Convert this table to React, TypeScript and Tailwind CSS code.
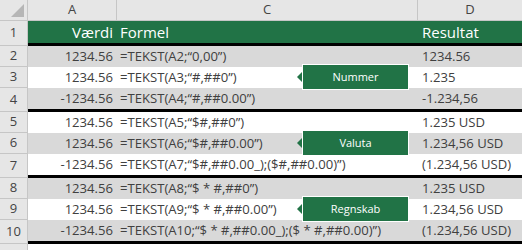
import React from "react";

type Row = {
  n: number;
  a: string;
  c: string;
  d: string;
  gray: boolean;
  thick?: boolean;
  tag?: string;
};

const rows: Row[] = [
  { n: 2, a: "1234.56", c: "=TEKST(A2;“0,00”)", d: "1234.56", gray: true },
  { n: 3, a: "1234.56", c: "=TEKST(A3;“#,##0”)", d: "1.235", gray: false, tag: "Nummer" },
  { n: 4, a: "-1234.56", c: "=TEKST(A4;“#,##0.00”)", d: "-1.234,56", gray: true, thick: true },
  { n: 5, a: "1234.56", c: "=TEKST(A5;“$#,##0”)", d: "1.235 USD", gray: false },
  { n: 6, a: "1234.56", c: "=TEKST(A6;“$#,##0.00”)", d: "1.234,56 USD", gray: true, tag: "Valuta" },
  { n: 7, a: "-1234.56", c: "=TEKST(A7;“$#,##0.00_);($#,##0.00)”)", d: "(1.234,56 USD)", gray: false, thick: true },
  { n: 8, a: "1234.56", c: "=TEKST(A8;“$ * #,##0”)", d: "1.235 USD", gray: true },
  { n: 9, a: "1234.56", c: "=TEKST(A9;“$ * #,##0.00”)", d: "1.234,56 USD", gray: false, tag: "Regnskab" },
  { n: 10, a: "-1234.56", c: "=TEKST(A10;“$ * #,##0.00_);($ * #,##0.00)”)", d: "(1.234,56 USD)", gray: true, thick: true },
];

function Callout({ label }: { label: string }) {
  return (
    <div className="absolute left-[185px] top-[-3px] z-10 flex h-[26px] w-[107px] items-center justify-center border border-white bg-[#217346] text-[11px] text-white">
      <span className="absolute left-[-6px] top-[7px] h-0 w-0 border-y-[5px] border-r-[5px] border-y-transparent border-r-[#217346]" />
      {label}
    </div>
  );
}

export default function App() {
  return (
    <div
      className="h-[250px] w-[522px] overflow-hidden bg-white text-[#404040]"
      style={{ fontFamily: '"Open Sans", sans-serif' }}
    >
      {/* column letters */}
      <div className="flex h-[21px] border-b border-[#c6c6c6] bg-[#e6e6e6] text-[13px] text-[#444]">
        <div className="relative w-[28px] border-r border-[#c6c6c6]">
          <span className="absolute bottom-[3px] right-[3px] h-0 w-0 border-b-[13px] border-l-[13px] border-b-[#b6b6b6] border-l-transparent" />
        </div>
        <div className="flex w-[89px] items-center justify-center border-r border-[#c6c6c6]">A</div>
        <div className="flex w-[301px] items-center justify-center border-r border-[#c6c6c6]">C</div>
        <div className="flex flex-1 items-center justify-center">D</div>
      </div>

      {/* header row */}
      <div className="flex h-[25px]">
        <div className="flex w-[28px] items-center justify-center border-b border-r border-[#c6c6c6] bg-[#e6e6e6] text-[13px] text-[#444]">
          1
        </div>
        <div className="grid flex-1 grid-cols-[89px_301px_1fr] border-b-[3px] border-black bg-[#217346] text-[15px] text-white">
          <div className="flex items-center justify-end pr-[4px]">Værdi</div>
          <div className="flex items-center pl-[3px]">Formel</div>
          <div className="flex items-center pl-[4px]">Resultat</div>
        </div>
      </div>

      {rows.map((r) => (
        <div key={r.n} className={r.thick ? "flex h-[24px]" : "flex h-[21px]"}>
          <div className="flex w-[28px] items-center justify-center border-b border-r border-[#c6c6c6] bg-[#e6e6e6] text-[13px] text-[#444]">
            {r.n}
          </div>
          <div
            className={`grid flex-1 grid-cols-[89px_301px_1fr] whitespace-nowrap text-[13.1px] ${
              r.gray ? "bg-[#d9d9d9]" : "bg-white"
            } ${r.thick ? "border-b-[3px] border-black" : ""}`}
          >
            <div className="flex items-center justify-end pr-[4px]">{r.a}</div>
            <div className="relative flex items-center pl-[3px]">
              {r.c}
              {r.tag && <Callout label={r.tag} />}
            </div>
            <div className="flex items-center pl-[4px]">{r.d}</div>
          </div>
        </div>
      ))}

      <div className="flex h-[10px]">
        <div className="w-[28px] border-r border-[#c6c6c6] bg-[#e6e6e6]" />
        <div className="flex-1 bg-white" />
      </div>
    </div>
  );
}
